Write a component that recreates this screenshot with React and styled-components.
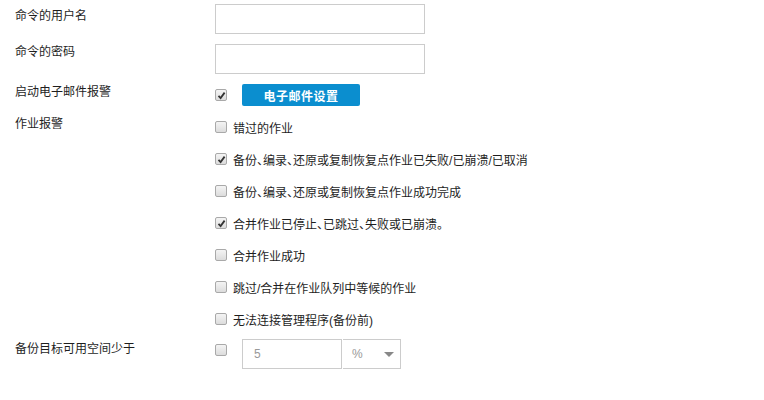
import React from "react";
import styled, { createGlobalStyle } from "styled-components";

const Global = createGlobalStyle`
  body {
    margin: 0;
    background: #fff;
    font-family: "Liberation Sans", "Noto Sans CJK SC", sans-serif;
    font-size: 12px;
    color: #1e1e1e;
  }
`;

const Page = styled.div`
  padding: 4px 0 0 15px;
  display: flex;
  flex-direction: column;
  gap: 10px;
`;

const Row = styled.div`
  display: flex;
  align-items: flex-start;
`;

const Label = styled.div`
  width: 200px;
  flex: none;
  line-height: ${(p) => p.$lh ?? 16}px;
  margin-top: ${(p) => p.$top ?? 0}px;
`;

const TextBox = styled.input`
  box-sizing: border-box;
  width: 210px;
  height: 30px;
  border: 1px solid #ccc;
  margin: 0;
  padding: 0 8px;
  outline: none;
`;

const Controls = styled.div`
  display: flex;
  align-items: ${(p) => p.$align ?? "center"};
  gap: ${(p) => p.$gap ?? 6}px;
`;

const BoxWrap = styled.span`
  box-sizing: border-box;
  width: 12px;
  height: 12px;
  flex: none;
  border: 1px solid #a9a9a9;
  border-radius: 2px;
  background: linear-gradient(#f4f4f4, #dcdcdc);
  display: flex;
  align-items: center;
  justify-content: center;
  margin-top: ${(p) => p.$top ?? 0}px;
`;

const CheckBox = ({ checked, top }) => (
  <BoxWrap $top={top}>
    {checked && (
      <svg width="9" height="9" viewBox="0 0 9 9">
        <path d="M1.5 4.8 L3.6 7 L7.6 1.6" fill="none" stroke="#333" strokeWidth="1.8" />
      </svg>
    )}
  </BoxWrap>
);

const BlueButton = styled.button`
  width: 118px;
  height: 22px;
  border: none;
  border-radius: 2px;
  background: #0b8ecf;
  color: #fff;
  font-family: inherit;
  font-size: 12px;
  font-weight: bold;
  letter-spacing: 0.5px;
  padding: 0;
`;

const List = styled.div`
  display: flex;
  flex-direction: column;
  gap: 12px;
  padding-top: 1px;
`;

const Item = styled.label`
  display: flex;
  align-items: center;
  gap: 6px;
  height: 20px;
  white-space: nowrap;
`;

const Comma = styled.span`
  font-feature-settings: "halt";
`;

const Combo = styled.div`
  display: flex;
  margin-left: 15px;
`;

const NumBox = styled.div`
  box-sizing: border-box;
  width: 100px;
  height: 30px;
  border: 1px solid #ccc;
  color: #999;
  display: flex;
  align-items: center;
  padding-left: 11px;
`;

const Select = styled.div`
  box-sizing: border-box;
  width: 58px;
  height: 30px;
  border: 1px solid #ccc;
  border-left: none;
  margin-left: 1px;
  color: #999;
  display: flex;
  align-items: center;
  justify-content: space-between;
  padding: 0 6px 0 9px;
`;

const Caret = styled.span`
  width: 0;
  height: 0;
  border-left: 5px solid transparent;
  border-right: 5px solid transparent;
  border-top: 5px solid #888;
`;

const jobAlerts = [
  { text: "错过的作业", checked: false },
  { text: "备份、编录、还原或复制恢复点作业已失败/已崩溃/已取消", checked: true },
  { text: "备份、编录、还原或复制恢复点作业成功完成", checked: false },
  { text: "合并作业已停止、已跳过、失败或已崩溃。", checked: true },
  { text: "合并作业成功", checked: false },
  { text: "跳过/合并在作业队列中等候的作业", checked: false },
  { text: "无法连接管理程序(备份前)", checked: false },
];

const withCommas = (text) =>
  text.split("、").flatMap((part, i) =>
    i === 0 ? [part] : [<Comma key={i}>、</Comma>, part]
  );

export default function App() {
  return (
    <>
      <Global />
      <Page>
        <Row>
          <Label $top={4}>命令的用户名</Label>
          <TextBox />
        </Row>
        <Row>
          <Label>命令的密码</Label>
          <TextBox type="password" />
        </Row>
        <Row>
          <Label>启动电子邮件报警</Label>
          <Controls $gap={15}>
            <CheckBox checked />
            <BlueButton>电子邮件设置</BlueButton>
          </Controls>
        </Row>
        <Row>
          <Label>作业报警</Label>
          <List>
            {jobAlerts.map((a) => (
              <Item key={a.text}>
                <CheckBox checked={a.checked} />
                <span>{withCommas(a.text)}</span>
              </Item>
            ))}
          </List>
        </Row>
        <Row>
          <Label $lh={20}>备份目标可用空间少于</Label>
          <Controls $align="flex-start" $gap={0}>
            <CheckBox top={5} />
            <Combo>
              <NumBox>5</NumBox>
              <Select>
                %<Caret />
              </Select>
            </Combo>
          </Controls>
        </Row>
      </Page>
    </>
  );
}
